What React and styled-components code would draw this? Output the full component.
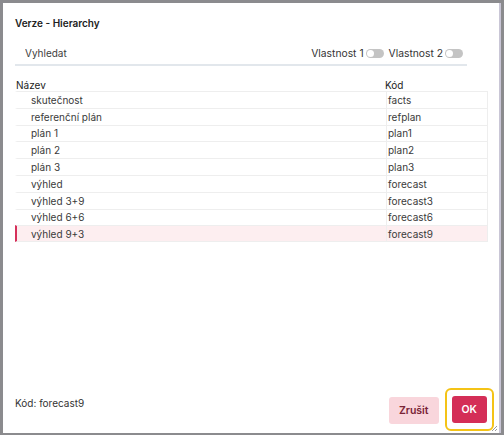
import React, { useState } from 'react';
import styled, { createGlobalStyle } from 'styled-components';

const GlobalStyle = createGlobalStyle`
  html, body {
    margin: 0;
    padding: 0;
    background: #8b8b8e;
  }
  body {
    font-family: Inter, "Open Sans", Arial, sans-serif;
    color: #333;
  }
`;

const Dialog = styled.div`
  box-sizing: border-box;
  width: 498px;
  height: 430px;
  margin: 3px 0 0 3px;
  background: #fff;
  border-right: 2px solid #c9c6d6;
  position: relative;
  display: flex;
  flex-direction: column;
  padding: 14px 10px 0 12px;
`;

const Title = styled.h2`
  margin: 0;
  font-size: 10px;
  font-weight: 600;
  color: #222;
  line-height: 12px;
`;

const SearchBar = styled.div`
  margin-top: 17px;
  width: 452px;
  height: 20px;
  box-sizing: border-box;
  border-bottom: 2px solid #e2e7ec;
  display: flex;
  align-items: center;
  gap: 5px;
  padding: 0 0 4px 10px;
`;

const SearchInput = styled.input`
  flex: 1;
  border: 0;
  outline: none;
  font-family: inherit;
  font-size: 10px;
  color: #333;
  padding: 0;
  &::placeholder {
    color: #3d3d3d;
  }
`;

const Property = styled.label`
  display: flex;
  align-items: center;
  gap: 2px;
  font-size: 10.3px;
  color: #333;
  &:last-child {
    margin-right: 4px;
  }
`;

const Switch = styled.span`
  width: 18px;
  height: 9px;
  border-radius: 5px;
  background: ${p => (p.on ? '#d6305a' : '#c4c4c4')};
  position: relative;
  display: inline-block;
  &::after {
    content: '';
    position: absolute;
    top: 1px;
    left: ${p => (p.on ? '10px' : '1px')};
    width: 7px;
    height: 7px;
    border-radius: 50%;
    background: #fff;
  }
`;

const Table = styled.div`
  margin-top: 12px;
  width: 473px;
  display: flex;
  flex-direction: column;
  font-size: 10px;
`;

const HeadRow = styled.div`
  display: grid;
  grid-template-columns: 369px 1fr;
  height: 13px;
  align-items: center;
  color: #222;
  & > span {
    padding-left: 1px;
  }
`;

const Row = styled.div`
  display: grid;
  grid-template-columns: 369px 1fr;
  height: 16.8px;
  box-sizing: border-box;
  align-items: center;
  border-top: 1px solid #eeeeee;
  border-right: 1px solid #eeeeee;
  border-left: 2px solid ${p => (p.selected ? '#d6305a' : 'transparent')};
  background: ${p => (p.selected ? '#fdeef0' : '#fff')};
  color: #3a3a3a;
  cursor: pointer;
  &:last-child {
    border-bottom: 1px solid #eeeeee;
  }
`;

const NameCell = styled.span`
  padding-left: 14px;
`;

const CodeCell = styled.span`
  height: 100%;
  display: flex;
  align-items: center;
  border-left: 1px solid #eeeeee;
  padding-left: 1px;
`;

const Footer = styled.div`
  margin-top: auto;
  display: flex;
  align-items: flex-start;
  padding-bottom: 2px;
`;

const Status = styled.span`
  font-size: 10px;
  line-height: 12px;
  color: #333;
  flex: 1;
  margin-top: 9px;
`;

const Button = styled.button`
  font-family: inherit;
  font-size: 10.5px;
  font-weight: 600;
  height: 27px;
  border: 0;
  border-radius: 3px;
  padding: 0 10px;
  margin-top: ${p => (p.primary ? '0' : '9px')};
  background: ${p => (p.primary ? '#d42e57' : '#f9d6dc')};
  color: ${p => (p.primary ? '#fff' : '#7a2436')};
  cursor: pointer;
`;

const FocusRing = styled.span`
  margin-left: 6px;
  margin-right: -5px;
  padding: 6px 5px;
  border: 2px solid #f4c316;
  border-radius: 6px;
  display: flex;
`;

const Grip = styled.svg`
  position: absolute;
  right: 1px;
  bottom: 1px;
`;

const versions = [
  { name: 'skutečnost', code: 'facts' },
  { name: 'referenční plán', code: 'refplan' },
  { name: 'plán 1', code: 'plan1' },
  { name: 'plán 2', code: 'plan2' },
  { name: 'plán 3', code: 'plan3' },
  { name: 'výhled', code: 'forecast' },
  { name: 'výhled 3+9', code: 'forecast3' },
  { name: 'výhled 6+6', code: 'forecast6' },
  { name: 'výhled 9+3', code: 'forecast9' },
];

const App = () => {
  const [selected, setSelected] = useState('forecast9');

  return (
    <>
      <GlobalStyle />
      <Dialog>
        <Title>Verze - Hierarchy</Title>
        <SearchBar>
          <SearchInput placeholder="Vyhledat" />
          <Property>
            Vlastnost 1
            <Switch />
          </Property>
          <Property>
            Vlastnost 2
            <Switch />
          </Property>
        </SearchBar>
        <Table>
          <HeadRow>
            <span>Název</span>
            <span>Kód</span>
          </HeadRow>
          {versions.map(v => (
            <Row
              key={v.code}
              selected={selected === v.code}
              onClick={() => setSelected(v.code)}
            >
              <NameCell>{v.name}</NameCell>
              <CodeCell>{v.code}</CodeCell>
            </Row>
          ))}
        </Table>
        <Footer>
          <Status>Kód: {selected}</Status>
          <Button>Zrušit</Button>
          <FocusRing>
            <Button primary>OK</Button>
          </FocusRing>
        </Footer>
        <Grip width="7" height="7" viewBox="0 0 7 7">
          <path d="M6 1 L1 6 M6 4 L4 6" stroke="#999" strokeWidth="1" />
        </Grip>
      </Dialog>
    </>
  );
};

export default App;
